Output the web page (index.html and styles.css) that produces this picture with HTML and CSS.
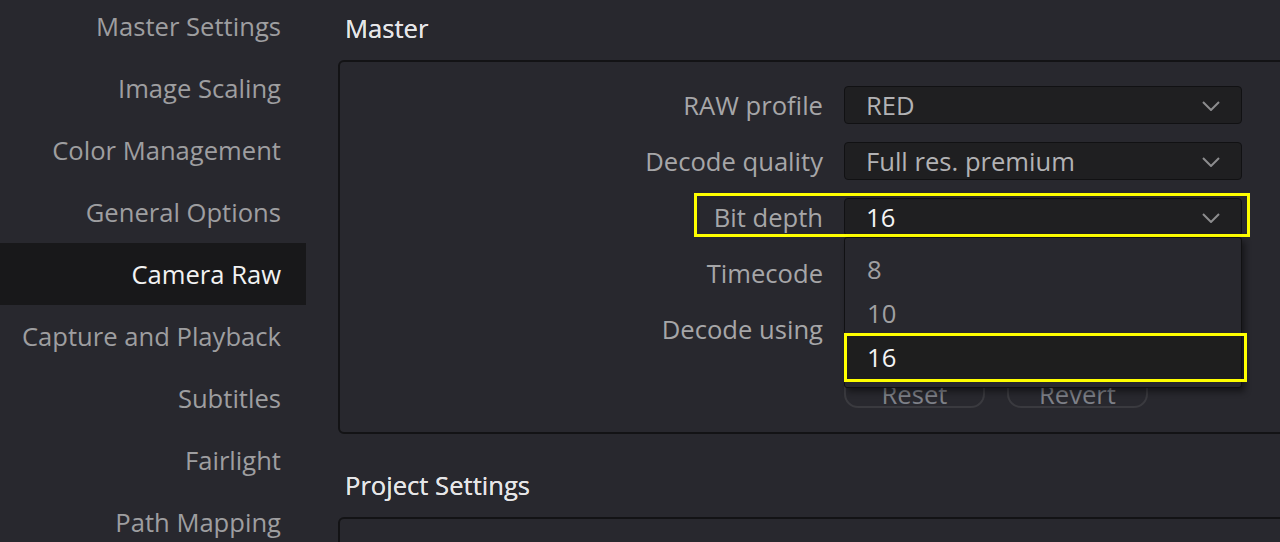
FILE: index.html
```html
<!DOCTYPE html>
<html lang="en">
<head>
  <meta charset="UTF-8">
  <title>Project Settings - Camera Raw</title>
  <link rel="stylesheet" href="styles.css">
</head>
<body>
  <nav class="sidebar">
    <div class="nav-item">Master Settings</div>
    <div class="nav-item">Image Scaling</div>
    <div class="nav-item">Color Management</div>
    <div class="nav-item">General Options</div>
    <div class="nav-item active">Camera Raw</div>
    <div class="nav-item">Capture and Playback</div>
    <div class="nav-item">Subtitles</div>
    <div class="nav-item">Fairlight</div>
    <div class="nav-item">Path Mapping</div>
  </nav>

  <main class="content">
    <h2 class="section-title">Master</h2>
    <div class="panel">
      <div class="form">
        <div class="row">
          <label class="label">RAW profile</label>
          <div class="select"><span>RED</span><svg class="chevron" viewBox="0 0 18 10"><path d="M1 1l8 8 8-8"/></svg></div>
        </div>
        <div class="row">
          <label class="label">Decode quality</label>
          <div class="select"><span>Full res. premium</span><svg class="chevron" viewBox="0 0 18 10"><path d="M1 1l8 8 8-8"/></svg></div>
        </div>
        <div class="row">
          <label class="label">Bit depth</label>
          <div class="select open">
            <span class="current">16</span><svg class="chevron" viewBox="0 0 18 10"><path d="M1 1l8 8 8-8"/></svg>
            <ul class="popup">
              <li>8</li>
              <li>10</li>
              <li class="selected">16</li>
            </ul>
          </div>
          <div class="highlight row-highlight"></div>
        </div>
        <!-- these two sit under the open list, values not shown -->
        <div class="row">
          <label class="label">Timecode</label>
          <div class="select"><span></span><svg class="chevron" viewBox="0 0 18 10"><path d="M1 1l8 8 8-8"/></svg></div>
        </div>
        <div class="row">
          <label class="label">Decode using</label>
          <div class="select"><span></span><svg class="chevron" viewBox="0 0 18 10"><path d="M1 1l8 8 8-8"/></svg></div>
        </div>
        <div class="row">
          <span></span>
          <div class="buttons">
            <button class="btn">Reset</button>
            <button class="btn">Revert</button>
          </div>
        </div>
      </div>
    </div>

    <h2 class="section-title sub">Project Settings</h2>
    <div class="panel"></div>
  </main>
</body>
</html>
```

FILE: styles.css
```css
body {
  margin: 0;
  height: 542px;
  overflow: hidden;
  display: flex;
  background: #28282e;
  font-family: 'Open Sans', 'Noto Sans', sans-serif;
  font-size: 25.6px;
  color: #a4a4a6;
}
.sidebar {
  width: 306px;
  flex-shrink: 0;
  margin-top: -5px;
}
.nav-item {
  height: 62px;
  line-height: 64px;
  text-align: right;
  padding-right: 25px;
  color: #9e9ea0;
  white-space: nowrap;
}
.nav-item.active {
  background: #18181a;
  color: #f2f2f2;
}
.content {
  flex: 1;
  padding-left: 32px;
  margin-right: -40px;
}
.section-title {
  margin: 0;
  height: 60px;
  line-height: 58px;
  padding-left: 7px;
  font-size: 25.6px;
  font-weight: normal;
  color: #e6e6e8;
  text-shadow: 0 0 0.4px #e6e6e8;
}
.section-title.sub {
  height: 40px;
  line-height: 40px;
  padding-top: 32px;
  padding-bottom: 11px;
}
.panel {
  border: 2px solid #131315;
  border-radius: 6px;
  min-height: 60px;
}
.form {
  display: flex;
  flex-direction: column;
  gap: 18px;
  padding: 24px 0 24px;
}
.row {
  position: relative;
  display: grid;
  grid-template-columns: 483px 398px;
  column-gap: 21px;
  align-items: center;
}
.label {
  text-align: right;
  color: #a6a6a8;
  line-height: 37px;
}
.select {
  position: relative;
  height: 36px;
  display: flex;
  align-items: center;
  justify-content: space-between;
  padding: 0 21px 0 21px;
  background: #1f1f21;
  border: 1px solid #111113;
  border-radius: 4px;
  color: #b2b2b4;
}
.select span {
  line-height: 37px;
}
.select .current {
  color: #f4f4f4;
}
.chevron {
  width: 18px;
  height: 10px;
  margin-top: 2px;
  fill: none;
  stroke: #8c8c8e;
  stroke-width: 2;
}

/* open dropdown list */
.popup {
  position: absolute;
  top: 38px;
  left: -1px;
  right: -1px;
  margin: 0;
  padding: 10px 0 7px;
  list-style: none;
  background: #28282e;
  border: 1px solid #111113;
  border-radius: 3px;
  box-shadow: 3px 4px 6px rgba(0, 0, 0, 0.45);
  z-index: 2;
}
.popup li {
  height: 44px;
  line-height: 44px;
  padding-left: 22px;
  color: #a0a0a2;
}
.popup li.selected {
  position: relative;
  background: #1e1e1e;
  color: #f4f4f4;
}
.popup li.selected::after {
  content: '';
  position: absolute;
  left: -1px;
  right: -6px;
  top: -3px;
  bottom: -2px;
  border: 3px solid #ffff00;
}

.highlight {
  position: absolute;
  border: 3px solid #ffff00;
  pointer-events: none;
  z-index: 1;
}
.row-highlight {
  left: 354px;
  width: 550px;
  top: -5px;
  height: 38px;
}

.buttons {
  display: flex;
  gap: 22px;
  margin-top: 6px;
}
.btn {
  width: 141px;
  height: 36px;
  border: 2px solid #3a3a3f;
  border-radius: 14px;
  background: transparent;
  font-family: inherit;
  font-size: 25.6px;
  line-height: 30px;
  padding: 6px 0 0;
  color: #7e8088;
}
```
